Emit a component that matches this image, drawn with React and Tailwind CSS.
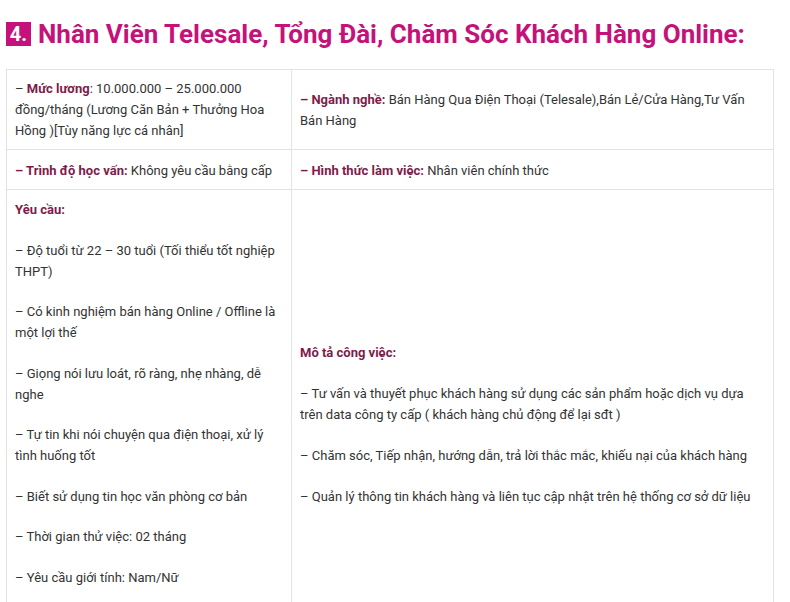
import React from "react";

const Label = ({ children }) => (
  <strong className="font-bold text-[#7d1c4a]">{children}</strong>
);

const requirements = [
  "– Độ tuổi từ 22 – 30 tuổi (Tối thiểu tốt nghiệp THPT)",
  "– Có kinh nghiệm bán hàng Online / Offline là một lợi thế",
  "– Giọng nói lưu loát, rõ ràng, nhẹ nhàng, dễ nghe",
  "– Tự tin khi nói chuyện qua điện thoại, xử lý tình huống tốt",
  "– Biết sử dụng tin học văn phòng cơ bản",
  "– Thời gian thử việc: 02 tháng",
  "– Yêu cầu giới tính: Nam/Nữ",
];

const duties = [
  "– Tư vấn và thuyết phục khách hàng sử dụng các sản phẩm hoặc dịch vụ dựa trên data công ty cấp ( khách hàng chủ động để lại sđt )",
  "– Chăm sóc, Tiếp nhận, hướng dẫn, trả lời thắc mắc, khiếu nại của khách hàng",
  "– Quản lý thông tin khách hàng và liên tục cập nhật trên hệ thống cơ sở dữ liệu",
];

export default function App() {
  return (
    <div className="min-h-screen bg-white font-['Roboto',sans-serif] text-[#333]">
      <div className="pl-[6px] pr-[17px] pt-[18px]">
        <h2 className="flex items-center gap-[7px] text-[26px] font-bold leading-[32px] text-[#c5127a]">
          <span className="inline-flex h-[24px] w-[25px] items-center justify-center bg-[#c5127a] text-[20px] leading-none text-white">
            4.
          </span>
          <span>Nhân Viên Telesale, Tổng Đài, Chăm Sóc Khách Hàng Online:</span>
        </h2>

        <table className="mt-[19px] w-[768px] table-fixed border-collapse text-[13px] leading-[21px]">
          <colgroup>
            <col className="w-[285px]" />
            <col />
          </colgroup>
          <tbody>
            <tr>
              <td className="border border-[#e3e3e3] px-[8px] py-[8px] align-middle">
                – <Label>Mức lương</Label>: 10.000.000 – 25.000.000 đồng/tháng (Lương Căn Bản + Thưởng Hoa Hồng )[Tùy năng lực cá nhân]
              </td>
              <td className="border border-[#e3e3e3] px-[8px] py-[8px] align-middle">
                <Label>– Ngành nghề:</Label> Bán Hàng Qua Điện Thoại (Telesale),Bán Lẻ/Cửa Hàng,Tư Vấn Bán Hàng
              </td>
            </tr>
            <tr>
              <td className="border border-[#e3e3e3] px-[8px] pt-[10px] pb-[8px] align-middle">
                <Label>– Trình độ học vấn:</Label> Không yêu cầu bằng cấp
              </td>
              <td className="border border-[#e3e3e3] px-[8px] pt-[10px] pb-[8px] align-middle">
                <Label>– Hình thức làm việc:</Label> Nhân viên chính thức
              </td>
            </tr>
            <tr>
              <td className="border border-[#e3e3e3] px-[8px] pt-[9px] pb-[72px] align-top">
                <p className="mb-[19.5px]">
                  <Label>Yêu cầu:</Label>
                </p>
                {requirements.map((r, i) => (
                  <p key={i} className="mb-[19.5px]">
                    {r}
                  </p>
                ))}
              </td>
              <td className="border border-[#e3e3e3] px-[8px] py-[9px] align-middle">
                <p className="mb-[20px]">
                  <Label>Mô tả công việc:</Label>
                </p>
                {duties.map((d, i) => (
                  <p key={i} className="mb-[20px]">
                    {d}
                  </p>
                ))}
              </td>
            </tr>
          </tbody>
        </table>
      </div>
    </div>
  );
}
